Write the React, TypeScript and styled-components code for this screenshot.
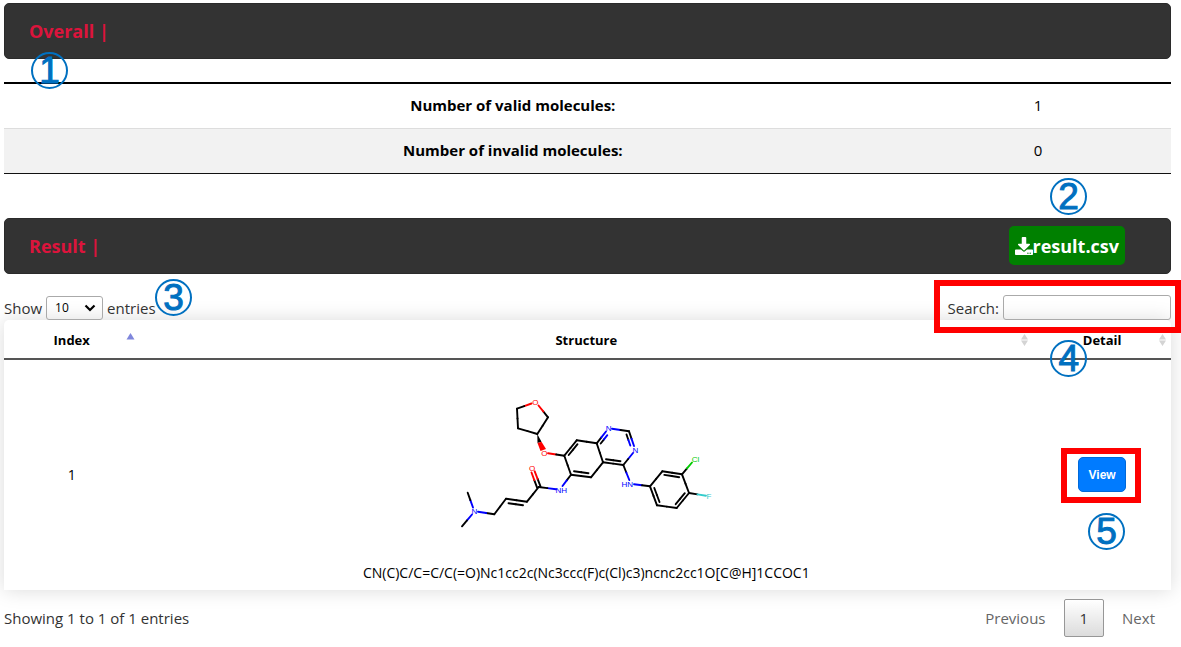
import React from 'react';
import styled, { createGlobalStyle } from 'styled-components';

const GlobalStyle = createGlobalStyle`
  *, *::before, *::after { box-sizing: border-box; }
  body {
    margin: 0;
    background: #fff;
    color: #000;
    font-family: "Open Sans", "Noto Sans", sans-serif;
    font-size: 14px;
    line-height: 20px;
    overflow-x: hidden;
  }
`;

const Page = styled.main`
  padding: 3px 10px 8px 4px;
`;

const Section = styled.section`
  position: relative;
`;

const Bar = styled.header`
  position: relative;
  display: flex;
  align-items: center;
  justify-content: space-between;
  height: 56px;
  padding: 0 45px 0 24px;
  border: 1px solid #2b2b2b;
  border-radius: 5px;
  background: #333;
`;

const Title = styled.h2`
  margin: 0;
  color: #dc143c;
  font-size: 18px;
  line-height: 28px;
  font-weight: 700;
`;

const DownloadButton = styled.button`
  display: flex;
  align-items: center;
  height: 39px;
  padding: 0 6px;
  border: 0;
  border-radius: 5px;
  background: #008000;
  color: #fff;
  font: 700 18px/28px "Open Sans", "Noto Sans", sans-serif;
`;

const Step = styled.span<{ $left?: string; $right?: string; $top: string }>`
  position: absolute;
  z-index: 2;
  top: ${(p) => p.$top};
  left: ${(p) => p.$left ?? 'auto'};
  right: ${(p) => p.$right ?? 'auto'};
  width: 37px;
  height: 37px;
  border: 2px solid #0070c0;
  border-radius: 50%;
  color: #0070c0;
  font: 37px/34px "Liberation Sans", sans-serif;
  -webkit-text-stroke: 1px #0070c0;
  text-align: center;
`;

const Highlight = styled.span<{ $inset: string }>`
  position: absolute;
  z-index: 1;
  inset: ${(p) => p.$inset};
  border: 6px solid #f00;
  pointer-events: none;
`;

const SummaryTable = styled.table`
  width: 100%;
  margin: 23px 0 44px;
  border-collapse: collapse;
  border-top: 2px solid #000;
  border-bottom: 1px solid #111;
  table-layout: fixed;
`;

const SummaryRow = styled.tr`
  height: 45px;
  & + & {
    background: #f2f2f2;
    border-top: 1px solid #ddd;
  }
`;

const SummaryCell = styled.td`
  padding: 0 0 2px;
  font-size: 15px;
  font-weight: 400;
  text-align: center;
  &:is(th) {
    font-weight: 700;
  }
`;

const SummaryCol = styled.col<{ $width: string }>`
  width: ${(p) => p.$width};
`;

const Controls = styled.div`
  position: relative;
  display: flex;
  align-items: center;
  justify-content: space-between;
  height: 24px;
  margin-top: 22px;
  color: #333;
  font-size: 15px;
`;

const ControlLabel = styled.label`
  display: flex;
  align-items: center;
  gap: 4px;
`;

const SelectBox = styled.span`
  position: relative;
  display: flex;
  svg {
    position: absolute;
    right: 7px;
    top: 8px;
    pointer-events: none;
  }
`;

const Select = styled.select`
  width: 57px;
  height: 24px;
  padding: 0 8px;
  appearance: none;
  border: 1px solid #aaa;
  border-radius: 3px;
  background: transparent;
  color: #000;
  font: 12px/20px "Open Sans", "Noto Sans", sans-serif;
`;

const SearchInput = styled.input`
  width: 168px;
  height: 25px;
  padding: 4px;
  border: 1px solid #aaa;
  border-radius: 3px;
  background: transparent;
`;

const ResultTable = styled.table`
  width: 100%;
  border-collapse: separate;
  border-spacing: 0;
  table-layout: fixed;
  border-radius: 5px 5px 0 0;
  background: #fff;
  box-shadow: 0 0 20px rgba(0, 0, 0, 0.15);
`;

const HeadCell = styled.th<{ $width: string }>`
  position: relative;
  width: ${(p) => p.$width};
  height: 40px;
  padding: 2px 0 0;
  border-bottom: 2px solid #555;
  font-weight: 700;
  font-size: 13px;
  svg {
    position: absolute;
    right: 4px;
    top: 11px;
  }
`;

const BodyCell = styled.td`
  height: 230px;
  padding: 0;
  text-align: center;
  vertical-align: middle;
`;

const Structure = styled.figure`
  display: flex;
  flex-direction: column;
  align-items: center;
  gap: 32px;
  margin: 0;
  padding-top: 28px;
  font-size: 14px;
`;

const ViewWrap = styled.div`
  position: relative;
  display: inline-flex;
`;

const ViewButton = styled.button`
  width: 48px;
  height: 35px;
  padding: 0;
  border: 1px solid #0069d9;
  border-radius: 5px;
  background: #007bff;
  color: #fff;
  font: 700 12px/20px "Liberation Sans", sans-serif;
`;

const Footer = styled.footer`
  display: flex;
  align-items: center;
  justify-content: space-between;
  margin-top: 9px;
  color: #333;
  font-size: 15px;
`;

const Pager = styled.nav`
  display: flex;
  gap: 2px;
`;

const PageButton = styled.button<{ $current?: boolean }>`
  height: 38px;
  padding: 0 15px;
  border: 1px solid ${(p) => (p.$current ? '#979797' : 'transparent')};
  border-radius: 2px;
  background: ${(p) => (p.$current ? 'linear-gradient(#fff, #dcdcdc)' : 'transparent')};
  color: ${(p) => (p.$current ? '#333' : '#666')};
  font: 15px/20px "Open Sans", "Noto Sans", sans-serif;
`;

const DownloadIcon = () => (
  <svg width="18" height="18" viewBox="0 0 512 512" fill="#fff" aria-hidden="true">
    <path d="M216 0h80c13.300 0 24 10.700 24 24v168h87.700c17.800 0 26.700 21.500 14.100 34.100L269.700 378.300c-7.500 7.500-19.800 7.500-27.300 0L90.100 226.100c-12.600-12.600-3.700-34.100 14.100-34.100H192V24c0-13.300 10.700-24 24-24zm296 376v112c0 13.300-10.700 24-24 24H24c-13.300 0-24-10.700-24-24V376c0-13.300 10.700-24 24-24h146.700l49 49c20.100 20.100 52.500 20.100 72.600 0l49-49H488c13.300 0 24 10.700 24 24zm-124 88c0-11-9-20-20-20s-20 9-20 20 9 20 20 20 20-9 20-20zm64 0c0-11-9-20-20-20s-20 9-20 20 9 20 20 20 20-9 20-20z" />
  </svg>
);

const SortIcon = ({ sorted = false }: { sorted?: boolean }) => (
  <svg width="9" height="18" viewBox="0 0 9 18" aria-hidden="true">
    {sorted ? (
      <path d="M0.500 8.500L4.500 2L8.500 8.500Z" fill="#7f86dc" />
    ) : (
      <path d="M1 8.500L4.500 3L8 8.500ZM1 9.500L4.500 15L8 9.500Z" fill="#d4d4d4" />
    )}
  </svg>
);

const BLACK = '#000';
const RED = '#f00';
const BLUE = '#00f';
const GREEN = '#00cc00';
const CYAN = '#33cccc';

type Point = [number, number];
type Bond = { from: Point; to: Point; start?: string; end?: string };

const bonds: Bond[] = [
  // tetrahydrofuran ring
  { from: [531.5, 403.5], to: [517, 408.7], start: RED },
  { from: [517, 408.7], to: [518, 428.3] },
  { from: [518, 428.3], to: [537.3, 434] },
  { from: [537.3, 434], to: [548, 417.3] },
  { from: [548, 417.3], to: [538.5, 405.5], end: RED },
  // ether link and fused ring system
  { from: [548, 453.2], to: [564.3, 455.7], start: RED },
  { from: [564.3, 455.7], to: [576.7, 440.3] },
  { from: [568.7, 455], to: [577.5, 444.2] },
  { from: [576.7, 440.3], to: [596.7, 443.3] },
  { from: [596.7, 443.3], to: [603, 462.3] },
  { from: [603, 462.3], to: [591, 477.3] },
  { from: [591, 477.3], to: [571, 474.7] },
  { from: [588.5, 473.2], to: [574, 471.2] },
  { from: [571, 474.7], to: [564.3, 455.7] },
  { from: [596.7, 443.3], to: [606, 431.5], end: BLUE },
  { from: [600.7, 443.5], to: [607.3, 435.2], end: BLUE },
  { from: [612, 428.7], to: [629, 431.3], start: BLUE },
  { from: [629, 431.3], to: [634, 446], end: BLUE },
  { from: [626.5, 434.5], to: [630.3, 445.5], end: BLUE },
  { from: [633, 453], to: [623.3, 465], start: BLUE },
  { from: [623.3, 465], to: [603, 462.3] },
  { from: [620.5, 461.2], to: [606, 459.2] },
  // aniline
  { from: [623.3, 465], to: [629.3, 480], end: BLUE },
  { from: [634, 484.2], to: [650, 486.3], start: BLUE },
  { from: [650, 486.3], to: [662.3, 471.3] },
  { from: [662.3, 471.3], to: [682, 474.3] },
  { from: [664.3, 474.9], to: [679.2, 477.2] },
  { from: [682, 474.3], to: [689, 493] },
  { from: [689, 493], to: [676.7, 508] },
  { from: [684.8, 493.2], to: [675.7, 504.2] },
  { from: [676.7, 508], to: [657, 505.3] },
  { from: [657, 505.3], to: [650, 486.3] },
  { from: [659.5, 502], to: [654.3, 488] },
  { from: [682, 474.3], to: [692, 462.5], end: GREEN },
  { from: [689, 493], to: [706, 495.7], end: CYAN },
  // amide side chain
  { from: [571, 474.7], to: [562.5, 486], end: BLUE },
  { from: [556, 489.3], to: [538.7, 487], start: BLUE },
  { from: [537.1, 487.6], to: [531.5, 472.5], end: RED },
  { from: [540.5, 486.4], to: [534.7, 471.3], end: RED },
  { from: [538.7, 487], to: [527, 501.7] },
  { from: [527, 501.7], to: [506, 498.7] },
  { from: [523, 505.3], to: [508.5, 503.2] },
  { from: [506, 498.7], to: [494.3, 514.3] },
  { from: [494.3, 514.3], to: [478, 511.7], end: BLUE },
  { from: [473, 507.5], to: [467.7, 492.7], start: BLUE },
  { from: [472, 514.5], to: [462, 526.3], start: BLUE },
];

const atoms: { label: string; x: number; y: number; color: string }[] = [
  { label: 'O', x: 535.3, y: 405, color: RED },
  { label: 'O', x: 544.3, y: 455.5, color: RED },
  { label: 'O', x: 532, y: 471, color: RED },
  { label: 'N', x: 608.7, y: 431, color: BLUE },
  { label: 'N', x: 635.3, y: 452.5, color: BLUE },
  { label: 'HN', x: 627.3, y: 486.5, color: BLUE },
  { label: 'NH', x: 561.3, y: 492.7, color: BLUE },
  { label: 'N', x: 474.5, y: 514.2, color: BLUE },
  { label: 'Cl', x: 695.5, y: 462, color: GREEN },
  { label: 'F', x: 709, y: 498.8, color: CYAN },
];

const Molecule = () => (
  <svg width="252" height="136" viewBox="460 395 252 136" role="img" aria-label="Molecule structure">
    <g strokeWidth="1.900" strokeLinecap="round">
      {bonds.map(({ from, to, start = BLACK, end = BLACK }, i) => {
        const mid: Point = [(from[0] + to[0]) / 2, (from[1] + to[1]) / 2];
        return (
          <g key={i}>
            <line x1={from[0]} y1={from[1]} x2={mid[0]} y2={mid[1]} stroke={start} />
            <line x1={mid[0]} y1={mid[1]} x2={to[0]} y2={to[1]} stroke={end} />
          </g>
        );
      })}
    </g>
    <path d="M537.300 434L537.500 443L541.500 441.700Z" fill={BLACK} />
    <path d="M537.500 443L541.500 441.700L546 449L540.500 451Z" fill={RED} />
    <g fontFamily="Liberation Sans, sans-serif" fontSize="8" textAnchor="middle">
      {atoms.map(({ label, x, y, color }, i) => (
        <text key={i} x={x} y={y} fill={color}>
          {label}
        </text>
      ))}
    </g>
  </svg>
);

export default function App() {
  return (
    <>
      <GlobalStyle />
      <Page>
        <Section>
          <Bar>
            <Title>Overall |</Title>
            <Step $left="26px" $top="48px">1</Step>
          </Bar>
          <SummaryTable>
            <colgroup>
              <SummaryCol $width="87.2%" />
              <SummaryCol $width="2.8%" />
              <SummaryCol $width="10%" />
            </colgroup>
            <tbody>
              <SummaryRow>
                <SummaryCell as="th" scope="row">Number of valid molecules:</SummaryCell>
                <SummaryCell>1</SummaryCell>
                <SummaryCell />
              </SummaryRow>
              <SummaryRow>
                <SummaryCell as="th" scope="row">Number of invalid molecules:</SummaryCell>
                <SummaryCell>0</SummaryCell>
                <SummaryCell />
              </SummaryRow>
            </tbody>
          </SummaryTable>
        </Section>

        <Section>
          <Bar>
            <Title>Result |</Title>
            <DownloadButton type="button">
              <DownloadIcon />
              result.csv
            </DownloadButton>
            <Step $right="83px" $top="-41px">2</Step>
          </Bar>

          <Controls>
            <ControlLabel>
              Show
              <SelectBox>
                <Select defaultValue="10">
                  <option>10</option>
                  <option>25</option>
                  <option>50</option>
                  <option>100</option>
                </Select>
                <svg width="12" height="8" viewBox="0 0 12 8" aria-hidden="true">
                  <path d="M1.500 1.500L6 6L10.500 1.500" fill="none" stroke="#000" strokeWidth="2.200" />
                </svg>
              </SelectBox>
              entries
            </ControlLabel>
            <ControlLabel>
              Search:
              <SearchInput type="search" />
            </ControlLabel>
            <Step $left="151px" $top="-17px">3</Step>
            <Highlight $inset="-16px -10px -13px calc(100% - 237px)" />
          </Controls>

          <ResultTable>
            <thead>
              <tr>
                <HeadCell $width="11.6%" scope="col">
                  Index
                  <SortIcon sorted />
                </HeadCell>
                <HeadCell $width="76.6%" scope="col">
                  Structure
                  <SortIcon />
                </HeadCell>
                <HeadCell $width="11.8%" scope="col">
                  Detail
                  <SortIcon />
                  <Step $left="17px" $top="20px">4</Step>
                </HeadCell>
              </tr>
            </thead>
            <tbody>
              <tr>
                <BodyCell>1</BodyCell>
                <BodyCell>
                  <Structure>
                    <Molecule />
                    <figcaption>CN(C)C/C=C/C(=O)Nc1cc2c(Nc3ccc(F)c(Cl)c3)ncnc2cc1O[C@H]1CCOC1</figcaption>
                  </Structure>
                </BodyCell>
                <BodyCell>
                  <ViewWrap>
                    <ViewButton type="button">View</ViewButton>
                    <Highlight $inset="-9px -15px -11px -17px" />
                    <Step $left="10px" $top="56px">5</Step>
                  </ViewWrap>
                </BodyCell>
              </tr>
            </tbody>
          </ResultTable>

          <Footer>
            <span>Showing 1 to 1 of 1 entries</span>
            <Pager aria-label="Pages">
              <PageButton type="button">Previous</PageButton>
              <PageButton type="button" $current>1</PageButton>
              <PageButton type="button">Next</PageButton>
            </Pager>
          </Footer>
        </Section>
      </Page>
    </>
  );
}
